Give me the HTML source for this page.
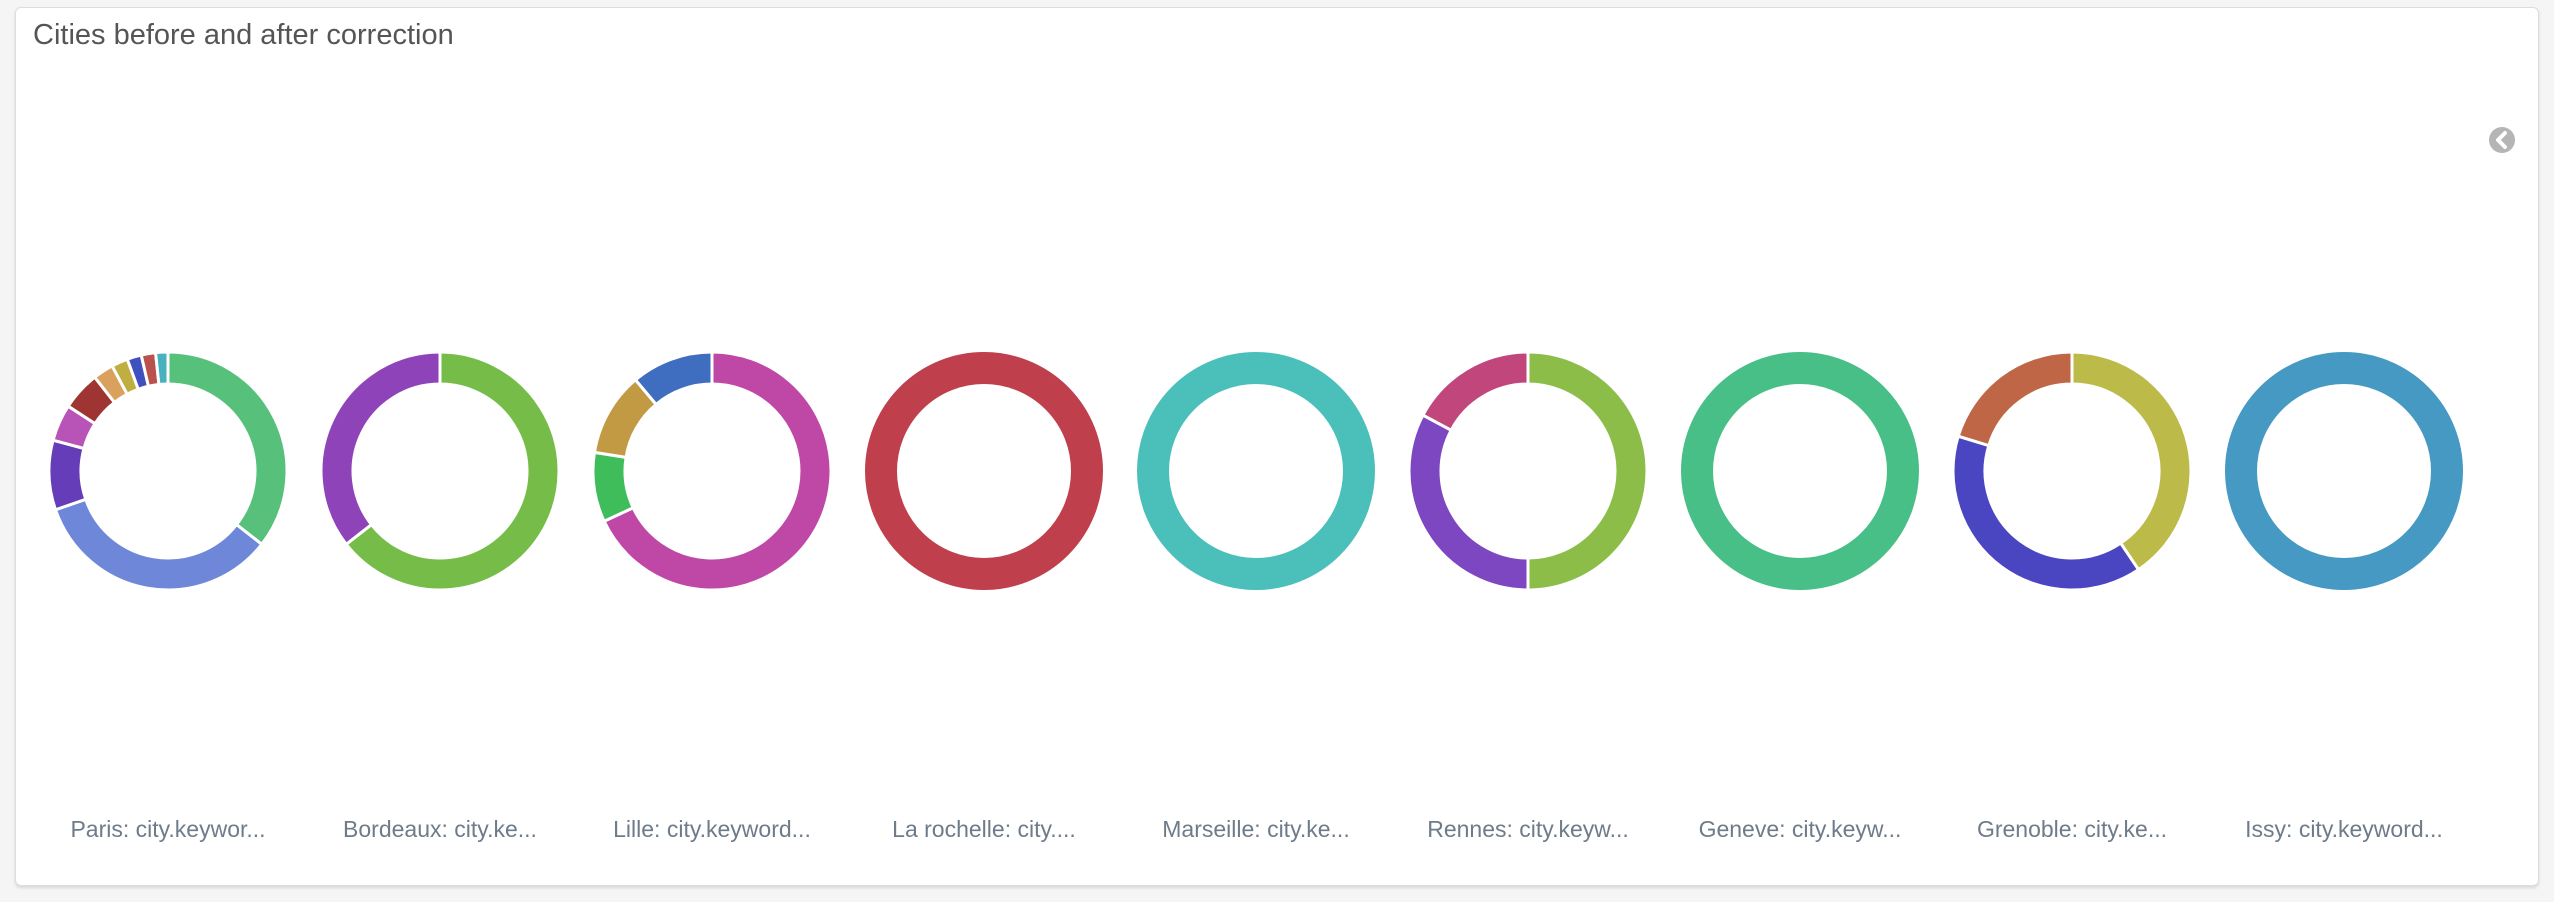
<!DOCTYPE html>
<html><head><meta charset="utf-8"><style>
html,body{margin:0;padding:0;background:#f5f5f5;width:2554px;height:902px;overflow:hidden;font-family:"Liberation Sans",sans-serif}
.panel{position:absolute;left:15px;top:7px;width:2522px;height:877px;background:#fff;border:1px solid #ddd;border-radius:6px;box-shadow:0 2px 3px rgba(0,0,0,.12)}
.title{position:absolute;left:33px;top:19px;font-size:29px;color:#555}
.lbl{position:absolute;top:816px;width:300px;margin-left:-150px;text-align:center;font-size:23px;color:#6e7b8a}
svg{position:absolute;left:0;top:0}
</style></head><body>
<div class="panel"></div>
<div class="title">Cities before and after correction</div>
<svg id="s" width="2554" height="902"></svg>
<div class="lbl" style="left:168px">Paris: city.keywor...</div>
<div class="lbl" style="left:440px">Bordeaux: city.ke...</div>
<div class="lbl" style="left:712px">Lille: city.keyword...</div>
<div class="lbl" style="left:984px">La rochelle: city....</div>
<div class="lbl" style="left:1256px">Marseille: city.ke...</div>
<div class="lbl" style="left:1528px">Rennes: city.keyw...</div>
<div class="lbl" style="left:1800px">Geneve: city.keyw...</div>
<div class="lbl" style="left:2072px">Grenoble: city.ke...</div>
<div class="lbl" style="left:2344px">Issy: city.keyword...</div>
<script>
var data=[
[[0,'#57c17b'],[128,'#6f87d8'],[251,'#663db8'],[285,'#b854b8'],[303,'#9e3533'],[322,'#daa05d'],[332,'#bfaf40'],[340,'#4050bf'],[347,'#b9524a'],[354,'#48b0bf']],
[[0,'#75bd48'],[232,'#8e44b8']],
[[0,'#bf47a6'],[245,'#3fbd5b'],[279,'#c29a44'],[320,'#3f6ec0']],
[[0,'#bf3f4c']],
[[0,'#4bbfba']],
[[0,'#8bbd48'],[180,'#7c47c0'],[298,'#c1467c']],
[[0,'#48bf86']],
[[0,'#bcba48'],[146,'#4a45c0'],[287,'#bf6646']],
[[0,'#4699c2']]
];
var s='',R=119,r=87,cy=471;
function pt(cx,a,rad){a=a*Math.PI/180;return (cx+rad*Math.sin(a)).toFixed(2)+' '+(cy-rad*Math.cos(a)).toFixed(2);}
data.forEach(function(d,i){
 var cx=168+272*i;
 if(d.length==1){s+='<circle cx="'+cx+'" cy="'+cy+'" r="'+((R+r)/2)+'" fill="none" stroke="'+d[0][1]+'" stroke-width="'+(R-r)+'"/>';return;}
 for(var j=0;j<d.length;j++){
  var a0=d[j][0],a1=j+1<d.length?d[j+1][0]:360,lg=(a1-a0)>180?1:0;
  s+='<path d="M'+pt(cx,a0,R)+' A'+R+' '+R+' 0 '+lg+' 1 '+pt(cx,a1,R)+' L'+pt(cx,a1,r)+' A'+r+' '+r+' 0 '+lg+' 0 '+pt(cx,a0,r)+'Z" fill="'+d[j][1]+'" stroke="#fff" stroke-width="3"/>';
 }
});
s+='<circle cx="2502" cy="140" r="13" fill="#b5b5b5"/><path d="M2505 133 L2498 140 L2505 147" fill="none" stroke="#fff" stroke-width="4" stroke-linecap="round" stroke-linejoin="round"/>';
document.getElementById('s').innerHTML=s;
</script>
</body></html>
